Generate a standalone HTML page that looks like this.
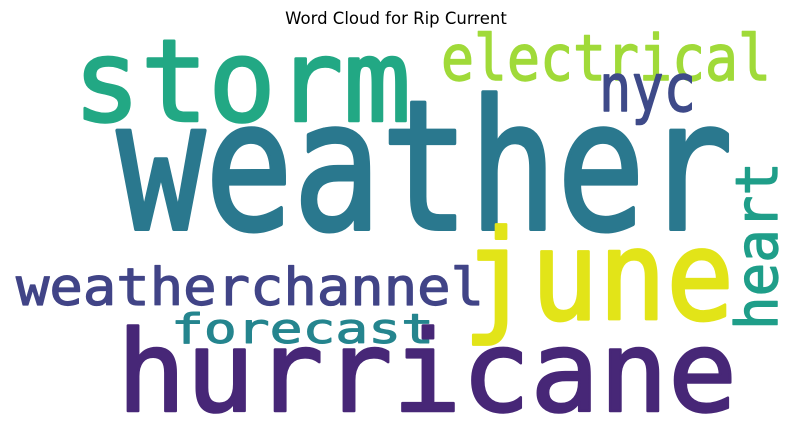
<!DOCTYPE html>
<html><head><meta charset="utf-8"><style>
html,body{margin:0;padding:0;background:#fff;}
svg{display:block;}
</style></head><body>
<svg width="790" height="427" viewBox="0 0 790 427" xmlns="http://www.w3.org/2000/svg">
<rect width="790" height="427" fill="#fff"/>
<text x="396" y="24" text-anchor="middle" font-family="DejaVu Sans, Liberation Sans, sans-serif" font-size="16.5" fill="#000">Word Cloud for Rip Current</text>
<g font-family="DejaVu Sans Mono, Liberation Mono, monospace" stroke-linejoin="round">
<text x="73" y="121" font-size="114" fill="#22a884" stroke="#22a884" stroke-width="2.5" textLength="338" lengthAdjust="spacingAndGlyphs">storm</text>
<text x="441" y="80" font-size="63" fill="#a0da39" stroke="#a0da39" stroke-width="1.4" textLength="330" lengthAdjust="spacingAndGlyphs">electrical</text>
<text x="599" y="111" font-size="66" fill="#3e4a89" stroke="#3e4a89" stroke-width="1.4" textLength="97" lengthAdjust="spacingAndGlyphs">nyc</text>
<text x="117" y="229" font-size="180" fill="#2a788e" stroke="#2a788e" stroke-width="4" textLength="616" lengthAdjust="spacingAndGlyphs">weather</text>
<text transform="translate(777,330) rotate(-90)" x="0" y="0" font-size="58" fill="#1f9e89" stroke="#1f9e89" stroke-width="1.3" textLength="168" lengthAdjust="spacingAndGlyphs">heart</text>
<text x="463" y="319" font-size="124" fill="#e2e418" stroke="#e2e418" stroke-width="2.8" textLength="271" lengthAdjust="spacingAndGlyphs">june</text>
<text x="16" y="305" font-size="52" fill="#414487" stroke="#414487" stroke-width="1.2" textLength="468" lengthAdjust="spacingAndGlyphs">weatherchannel</text>
<text x="171" y="343" font-size="41" fill="#25858e" stroke="#25858e" stroke-width="1" textLength="263" lengthAdjust="spacingAndGlyphs">forecast</text>
<text x="117" y="411" font-size="112" fill="#472777" stroke="#472777" stroke-width="2.5" textLength="620" lengthAdjust="spacingAndGlyphs">hurricane</text>
</g>
</svg>
</body></html>
